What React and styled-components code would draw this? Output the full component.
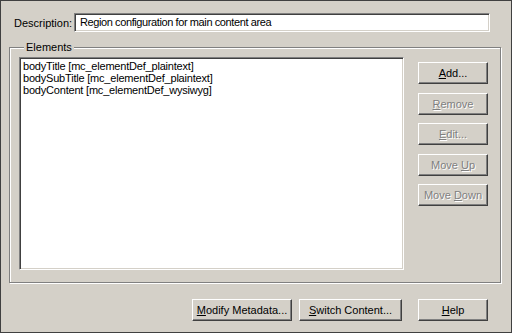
import React from 'react'
import styled, { createGlobalStyle } from 'styled-components'

const GlobalStyle = createGlobalStyle`
  html, body {
    margin: 0;
    padding: 0;
    background: #d4d0c8;
  }
  * {
    box-sizing: border-box;
  }
`

const Dialog = styled.div`
  width: 512px;
  height: 333px;
  border: 1px solid #404040;
  background: #d4d0c8;
  display: flex;
  flex-direction: column;
  font-family: 'Liberation Sans', Arial, sans-serif;
  font-size: 11px;
  color: #000;
`

const DescRow = styled.div`
  display: flex;
  align-items: center;
  margin: 12px 0 0 13px;
  height: 19px;
`

const Label = styled.label`
  width: 60px;
`

const TextInput = styled.div`
  width: 416px;
  height: 19px;
  background: #fff;
  border: 1px solid;
  border-color: #808080 #fff #fff #808080;
  box-shadow: inset 1px 1px 0 #404040, inset -1px -1px 0 #d4d0c8;
  padding: 0 5px;
  line-height: 17px;
  letter-spacing: -0.4px;
  white-space: nowrap;
`

const Group = styled.fieldset`
  margin: 9px 0 0 8px;
  width: 492px;
  height: 242px;
  padding: 3px 0 0 9px;
  border: 1px solid #808080;
  box-shadow: inset 1px 1px 0 #fff, 1px 1px 0 #fff;
  display: flex;
  min-width: 0;
`

const Legend = styled.legend`
  margin-left: 5px;
  padding: 0 2px;
  line-height: 13px;
  background: #d4d0c8;
`

const ListBox = styled.ul`
  list-style: none;
  margin: 0;
  width: 385px;
  height: 213px;
  background: #fff;
  border: 1px solid;
  border-color: #808080 #fff #fff #808080;
  box-shadow: inset 1px 1px 0 #404040, inset -1px -1px 0 #d4d0c8;
  padding: 2px 2px;
`

const ListItem = styled.li`
  line-height: 12px;
  padding-left: 1px;
  letter-spacing: -0.2px;
  white-space: nowrap;
`

const SideButtons = styled.div`
  display: flex;
  flex-direction: column;
  gap: 8.5px;
  margin: 5px 0 0 14px;
`

const Button = styled.button`
  width: ${p => p.$w || 70}px;
  height: 22px;
  padding: 0;
  background: #d4d0c8;
  border: 1px solid;
  border-color: #fff #404040 #404040 #fff;
  box-shadow: inset -1px -1px 0 #808080;
  font-family: inherit;
  font-size: 11px;
  color: ${p => (p.disabled ? '#808080' : '#000')};
  text-shadow: ${p => (p.disabled ? '1px 1px 0 #fff' : 'none')};
  cursor: default;
  u {
    text-decoration: underline;
  }
`

const Footer = styled.div`
  display: flex;
  justify-content: flex-end;
  margin: 16px 23px 0 0;
`

const Spacer = styled.div`
  width: ${p => p.$w}px;
`

const App = () => {
  return (
    <Dialog>
      <GlobalStyle />
      <DescRow>
        <Label>Description:</Label>
        <TextInput>Region configuration for main content area</TextInput>
      </DescRow>
      <Group>
        <Legend>Elements</Legend>
        <ListBox>
          <ListItem>bodyTitle [mc_elementDef_plaintext]</ListItem>
          <ListItem>bodySubTitle [mc_elementDef_plaintext]</ListItem>
          <ListItem>bodyContent [mc_elementDef_wysiwyg]</ListItem>
        </ListBox>
        <SideButtons>
          <Button><u>A</u>dd...</Button>
          <Button disabled><u>R</u>emove</Button>
          <Button disabled><u>E</u>dit...</Button>
          <Button disabled>Move <u>U</u>p</Button>
          <Button disabled>Move <u>D</u>own</Button>
        </SideButtons>
      </Group>
      <Footer>
        <Button $w={100}><u>M</u>odify Metadata...</Button>
        <Spacer $w={7} />
        <Button $w={103}><u>S</u>witch Content...</Button>
        <Spacer $w={16} />
        <Button $w={70}><u>H</u>elp</Button>
      </Footer>
    </Dialog>
  )
}

export default App
